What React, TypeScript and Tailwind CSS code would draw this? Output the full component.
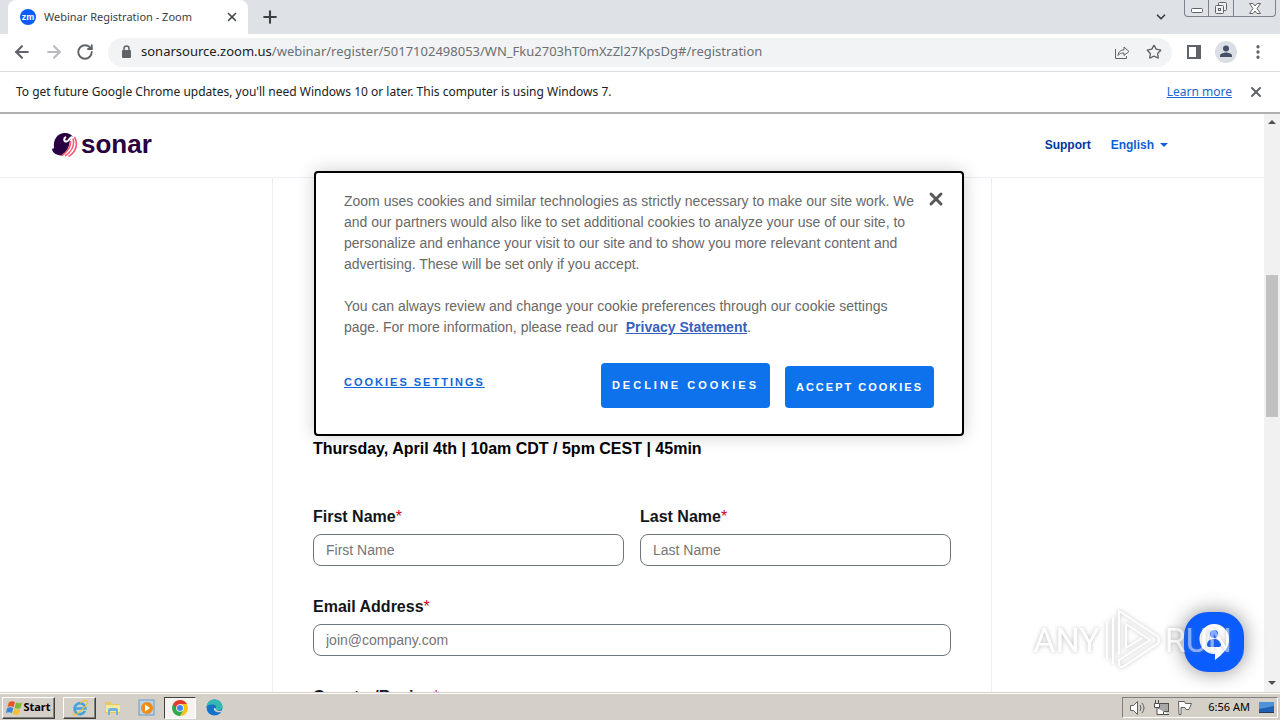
import { ReactNode, useState } from 'react';
import { ArrowLeft, ArrowRight, ChevronDown, MoreVertical, Plus, RotateCw, Star, X } from 'lucide-react';

const URL_HOST = 'sonarsource.zoom.us';
const URL_PATH = '/webinar/register/5017102498053/WN_Fku2703hT0mXzZl27KpsDg#/registration';

function ZoomFavicon() {
  return (
    <span className="flex h-4 w-4 items-center justify-center rounded-full bg-[#0b5cff] font-['Liberation_Sans',sans-serif] text-[9px] leading-none font-bold text-white">
      zm
    </span>
  );
}

function WindowButtons() {
  return (
    <div className="flex h-[17px] self-start rounded-b-sm border border-t-0 border-[#7d828c] text-[#5f6368]">
      <button type="button" aria-label="Minimize" className="flex w-6 items-end justify-center border-r border-[#7d828c] pb-[3px]">
        <svg width="12" height="5" viewBox="0 0 12 5" fill="#fff" stroke="currentColor">
          <rect x=".5" y=".5" width="11" height="4" rx="1" />
        </svg>
      </button>
      <button type="button" aria-label="Restore" className="flex w-[25px] items-center justify-center border-r border-[#7d828c]">
        <svg width="14" height="14" viewBox="0 0 14 14" fill="#eef0f3" stroke="currentColor">
          <rect x="4.500" y="1.500" width="8" height="8" rx="1" />
          <rect x="1.500" y="4.500" width="8" height="8" rx="1" />
          <rect x="4.500" y="7.500" width="2" height="2" />
        </svg>
      </button>
      <button type="button" aria-label="Close window" className="flex w-[41px] items-center justify-center">
        <svg width="12" height="11" viewBox="0 0 12 11" fill="#fff" stroke="currentColor">
          <path d="M.5.500h3.500l2 2.500 2-2.500h3.500l-3.500 5 3.500 5h-3.500l-2-2.500-2 2.500h-3.500l3.500-5z" />
        </svg>
      </button>
    </div>
  );
}

function TabStrip() {
  return (
    <div className="flex h-[34px] bg-[#dee1e6] text-[#3c4043]">
      <div className="ml-2 flex w-60 items-center rounded-t-lg bg-white pr-2 pl-3">
        <ZoomFavicon />
        <span className="ml-2 flex-1 text-[11px]">Webinar Registration - Zoom</span>
        <button type="button" aria-label="Close tab" className="flex h-4 w-4 items-center justify-center">
          <X className="h-3.5 w-3.5" strokeWidth={2.5} />
        </button>
      </div>
      <button type="button" aria-label="New tab" className="ml-3 self-center">
        <Plus className="h-5 w-5" strokeWidth={2.5} />
      </button>
      <button type="button" aria-label="Search tabs" className="mr-4 ml-auto self-center">
        <ChevronDown className="h-3.5 w-3.5" strokeWidth={3} />
      </button>
      <WindowButtons />
      <div className="w-1" />
    </div>
  );
}

function ShareIcon() {
  return (
    <svg width="16" height="16" viewBox="0 0 16 16" fill="none" stroke="currentColor">
      <path d="M1.500 5v9.500h11V12" />
      <path d="M4 11.500c.5-4 2.500-5.500 6-5.500V3l5 4.500-5 4V9c-3 0-4.500.5-6 2.500z" />
    </svg>
  );
}

function Toolbar() {
  return (
    <div className="flex h-[38px] items-center border-b border-[#dadce0] bg-white pb-px text-[#5f6368]">
      <button type="button" aria-label="Back" className="ml-3">
        <ArrowLeft className="h-5 w-5" strokeWidth={2.5} />
      </button>
      <button type="button" aria-label="Forward" className="ml-3 text-[#b9bbbe]">
        <ArrowRight className="h-5 w-5" strokeWidth={2.5} />
      </button>
      <button type="button" aria-label="Reload" className="ml-3">
        <RotateCw className="h-[18px] w-[18px]" strokeWidth={2.5} />
      </button>
      <div className="ml-3.5 flex h-[29px] min-w-0 flex-1 items-center rounded-full bg-[#f1f3f4] px-2.5">
        <svg width="16" height="16" viewBox="0 0 16 16" fill="none" className="shrink-0">
          <rect x="4" y="6" width="9" height="8" rx="1" fill="#5f6368" />
          <path d="M6 7V4.500a2.500 2.500 0 0 1 5 0V7" stroke="#5f6368" strokeWidth="1.500" />
        </svg>
        <button type="button" className="ml-[7px] flex-1 truncate text-left text-[13px] text-[#6b6f73]">
          <span className="text-[#202124]">{URL_HOST}</span>
          {URL_PATH}
        </button>
        <button type="button" aria-label="Share this page" className="mr-4">
          <ShareIcon />
        </button>
        <button type="button" aria-label="Bookmark this tab">
          <Star className="h-4 w-4" />
        </button>
      </div>
      <button type="button" aria-label="Side panel" className="ml-[15px]">
        <svg width="14" height="14" viewBox="0 0 14 14" fill="none">
          <rect x="1" y="1" width="12" height="12" stroke="#5f6368" strokeWidth="2" />
          <path d="M9 0h5v14H9z" fill="#5f6368" />
        </svg>
      </button>
      <button type="button" aria-label="Profile" className="ml-3.5">
        <svg width="22" height="22" viewBox="0 0 22 22">
          <circle cx="11" cy="11" r="11" fill="#dadee5" />
          <circle cx="11" cy="7.500" r="3" fill="#46506a" />
          <path d="M5 16v-1.500c0-2 4-3 6-3s6 1 6 3V16z" fill="#46506a" />
        </svg>
      </button>
      <button type="button" aria-label="Menu" className="mr-[13px] ml-3">
        <MoreVertical className="h-[18px] w-[18px]" strokeWidth={2.5} />
      </button>
    </div>
  );
}

function InfoBar() {
  return (
    <div className="flex h-[42px] items-center border-b-2 border-[#b0b0b0] bg-white pr-4 pl-4 text-xs text-[#202124]">
      <span className="flex-1">
        To get future Google Chrome updates, you'll need Windows 10 or later. This computer is using Windows 7.
      </span>
      <a href="#learn-more" className="text-[#1967d2] underline">
        Learn more
      </a>
      <button type="button" aria-label="Dismiss" className="ml-4 text-[#5f6368]">
        <X className="h-4 w-4" strokeWidth={3} />
      </button>
    </div>
  );
}

function SonarLogo() {
  return (
    <a href="#sonar" aria-label="Sonar" className="flex items-center gap-[3px] text-[#290042]">
      <svg width="27" height="26" viewBox="0 0 27 26" fill="none">
        <path
          d="M1 16.500c1 .5 1.500.3 2-.5C2 8 6 1.500 13 1c4-.3 7 1 8.500 3.500L19 8c-.5 6-3 12-7.500 15.500C6 23.500 1 21 1 16.500z"
          fill="#290042"
        />
        <path d="M15 5c-2.500 1-2.500 4.500.5 4.500 2.500 0 2.500-4 5.500-4.500" stroke="#fff" strokeWidth="2" />
        <path
          d="M19.500 9c.5 6-3.500 11-8.500 14.500M22 6.500c2 7-2 13.500-8 17.500M23.500 5c4 7 1.500 15-6 19.500"
          stroke="#fd5672"
          strokeWidth="1.600"
        />
      </svg>
      <span className="pb-0.5 text-[26px] leading-none font-bold">sonar</span>
    </a>
  );
}

function SiteHeader() {
  return (
    <header className="flex h-16 items-center border-b border-[#ededf4] pr-24 pl-[51px] pb-px">
      <SonarLogo />
      <nav className="ml-auto flex items-center gap-5 text-xs font-bold">
        <a href="#support" className="text-[#00359e]">
          Support
        </a>
        <button type="button" className="flex items-center gap-1.5 text-[#0e5fd8]">
          English
          <svg width="8" height="4" viewBox="0 0 8 4">
            <path d="M0 0h8L4 4z" fill="currentColor" />
          </svg>
        </button>
      </nav>
    </header>
  );
}

function Field({ id, label, children }: { id: string; label: string; children: ReactNode }) {
  return (
    <div className="flex flex-col gap-1">
      <label htmlFor={id} className="h-[25px] text-base font-bold">
        {label}
        <span className="font-normal text-[#d0021b]">*</span>
      </label>
      {children}
    </div>
  );
}

const inputClass =
  'h-8 w-full rounded-lg border border-[#6e7680] bg-white px-3 text-sm text-[#222230] placeholder:text-[#757575]';

function RegistrationForm() {
  return (
    <form className="mx-auto w-full max-w-[720px] border-x border-[#ededf4] px-10 pt-[259px] text-[#131619]">
      <p className="text-base font-bold text-black">Thursday, April 4th | 10am CDT / 5pm CEST | 45min</p>
      <div className="mt-11 grid grid-cols-2 gap-x-4 gap-y-[29px]">
        <Field id="first-name" label="First Name">
          <input id="first-name" placeholder="First Name" className={inputClass} />
        </Field>
        <Field id="last-name" label="Last Name">
          <input id="last-name" placeholder="Last Name" className={inputClass} />
        </Field>
        <div className="col-span-2">
          <Field id="email" label="Email Address">
            <input id="email" type="email" placeholder="join@company.com" className={inputClass} />
          </Field>
        </div>
        <div className="col-span-2">
          <Field id="country" label="Country/Region">
            <select id="country" className={inputClass} />
          </Field>
        </div>
      </div>
    </form>
  );
}

function CookieDialog({ onClose }: { onClose: () => void }) {
  return (
    <div
      role="dialog"
      aria-label="Cookie preferences"
      className="w-[650px] rounded-sm border-2 border-black bg-white px-7 pt-4 pb-[26px] shadow-[0_0_18px_rgba(0,0,0,0.2)]"
    >
      <div className="flex items-start">
        <div className="flex-1 pt-0.5 text-sm leading-[21px] text-[#696969]">
          <p>
            Zoom uses cookies and similar technologies as strictly necessary to make our site work. We
            <br />
            and our partners would also like to set additional cookies to analyze your use of our site, to
            <br />
            personalize and enhance your visit to our site and to show you more relevant content and
            <br />
            advertising. These will be set only if you accept.
          </p>
          <p className="mt-[21px]">
            You can always review and change your cookie preferences through our cookie settings
            <br />
            page. For more information, please read our&nbsp;{' '}
            <a href="#privacy" className="font-bold text-[#3860be] underline">
              Privacy Statement
            </a>
            .
          </p>
        </div>
        <button type="button" aria-label="Close" onClick={onClose} className="-mr-3 text-[#565656]">
          <X className="h-5 w-5" strokeWidth={3.5} />
        </button>
      </div>
      <div className="mt-[25px] flex items-end">
        <button type="button" className="mr-auto self-center pb-1.5 text-[11px] font-bold tracking-[2px] text-[#1068d8] underline">
          COOKIES SETTINGS
        </button>
        <button
          type="button"
          onClick={onClose}
          className="h-[45px] rounded-sm bg-[#0e72ed] px-[11px] text-[11px] font-bold tracking-[3px] text-white"
        >
          DECLINE COOKIES
        </button>
        <button
          type="button"
          onClick={onClose}
          className="ml-[15px] h-[42px] rounded-sm bg-[#0e72ed] px-[11px] text-[11px] font-bold tracking-[2px] text-white"
        >
          ACCEPT COOKIES
        </button>
      </div>
    </div>
  );
}

function PageScrollbar() {
  return (
    <div className="flex w-4 shrink-0 flex-col items-center bg-[#f1f1f1]">
      <svg width="16" height="17" viewBox="0 0 16 17">
        <path d="M4 10h8L8 6z" fill="#505050" />
      </svg>
      <div className="mt-36 h-[142px] w-3 bg-[#c1c1c1]" />
      <svg width="16" height="17" viewBox="0 0 16 17" className="mt-auto">
        <path d="M4 6h8l-4 4z" fill="#505050" />
      </svg>
    </div>
  );
}

function ChatButton() {
  return (
    <button
      type="button"
      aria-label="Open chat"
      className="flex h-[60px] w-[60px] items-center justify-center rounded-3xl bg-[#0b5cff] shadow-[0_0_20px_rgba(0,0,0,0.45)]"
    >
      <svg width="32" height="38" viewBox="0 0 32 38">
        <path d="M16 1a15 15 0 0 1 15 15c0 9-6 15-14 21v-6A15 15 0 1 1 16 1z" fill="#fff" />
        <circle cx="16" cy="11" r="4" fill="#0b5cff" />
        <path d="M9 22c0-4 3-6 7-6s7 2 7 6c0 1-1 2-2 2H11c-1 0-2-1-2-2z" fill="#0b5cff" />
      </svg>
    </button>
  );
}

function Watermark() {
  return (
    <div className="pointer-events-none flex items-center gap-1 font-['Roboto',sans-serif] text-[34px] leading-none text-white opacity-50 [text-shadow:0_0_4px_#777]">
      <span>ANY</span>
      <svg width="57" height="64" viewBox="0 0 57 64" fill="none" className="drop-shadow-[0_0_2px_#777]">
        <path
          d="M3 51V14M9 56V9M15 46V3l38 25a5 5 0 0 1 0 8L20 58c-3 2-5 1-5-2v-4l31-20-24-16v24l16-10"
          stroke="#fff"
          strokeWidth="2"
          strokeLinejoin="round"
        />
      </svg>
      <span>RUN</span>
    </div>
  );
}

const raised = 'border border-t-white border-l-white border-r-[#404040] border-b-[#404040] shadow-[inset_-1px_-1px_0_#808080]';
const sunken = 'border border-t-[#404040] border-l-[#404040] border-r-white border-b-white';

function WindowsFlag() {
  return (
    <svg width="17" height="16" viewBox="0 0 17 16">
      <path d="M3 2c2-1 4-1 6 0L7.500 7c-2-1-4-1-6 0z" fill="#e8542a" />
      <path d="M10 2.500c2 1 4 1 6 0L14.500 8c-2 1-4 1-6 0z" fill="#7cb83c" />
      <path d="M1.200 8c2-1 4-1 6 0L6 13c-2-1-4-1-6 0z" fill="#3b86d8" />
      <path d="M8.200 9c2 1 4 1 6 0L13 14c-2 1-4 1-6 0z" fill="#f5bf2b" />
    </svg>
  );
}

function ExplorerIcon() {
  return (
    <svg width="18" height="18" viewBox="0 0 18 18" fill="none">
      <path d="M14 12A5.500 5.500 0 1 1 14.500 9.500H4.500" stroke="#3fa4e0" strokeWidth="2.600" />
      <path d="M3 12c-2 4-1 5 2 3.500C11 12 18 4 16.500 2 15.500.5 12 2 9 4" stroke="#efc23a" strokeWidth="1.200" />
    </svg>
  );
}

function FolderIcon() {
  return (
    <svg width="18" height="18" viewBox="0 0 18 18">
      <path d="M1 3h6l1 2h8v9H1z" fill="#e9c75c" />
      <path d="M2 6h14v7H2z" fill="#f8e8a0" />
      <path d="M4 16v-5q0-2 2-2h6q2 0 2 2v5h-2v-4H6v4z" fill="#6db4dc" />
    </svg>
  );
}

function PlayerIcon() {
  return (
    <svg width="18" height="18" viewBox="0 0 18 18">
      <rect x="1" y="1" width="15" height="15" fill="#b7d4ec" stroke="#6d9cc4" />
      <circle cx="9" cy="9" r="6" fill="#f28a1c" />
      <path d="M7 5.500v7l5-3.500z" fill="#fff" />
    </svg>
  );
}

function ChromeIcon() {
  return (
    <svg width="16" height="16" viewBox="0 0 16 16">
      <path d="M8 8V0a8 8 0 0 1 6.900 4L16 8a8 8 0 0 1-8 8l3.500-6z" fill="#fbc116" />
      <path d="M8 8l3.500 2L8 16A8 8 0 0 1 1.100 4z" fill="#2da94f" />
      <path d="M1.100 4a8 8 0 0 1 13.800 0H8L5 9.500z" fill="#e33b2e" />
      <circle cx="8" cy="8" r="3.800" fill="#fff" />
      <circle cx="8" cy="8" r="3" fill="#4285f4" />
    </svg>
  );
}

function EdgeIcon() {
  return (
    <svg width="17" height="17" viewBox="0 0 17 17">
      <circle cx="8.500" cy="8.500" r="8" fill="#1473c9" />
      <path d="M.5 8C1 3 4.500.5 8.500.5c5 0 8 3.500 8 7 0 3-2.500 4-4.500 4s-3-.8-2-2c1-2-1-4-3.500-4S1.500 6 .5 8z" fill="#35b8b0" />
      <path d="M8 9c-1 3 3 5 7 4l1.500-.5-1-1c-3 1-6 0-5.500-2z" fill="#d4d0c8" />
    </svg>
  );
}

function Taskbar() {
  return (
    <footer className="flex h-7 items-center border-t border-[#d4d0c8] bg-[#d4d0c8] px-0.5 pt-0.5 text-[11px] text-black shadow-[inset_0_1px_0_#fff]">
      <button type="button" className={`flex h-[22px] w-[53px] items-center justify-center font-bold ${raised}`}>
        <WindowsFlag />
        Start
      </button>
      <button type="button" aria-label="Internet Explorer" className={`ml-2 flex h-[22px] w-[33px] items-center justify-center ${raised}`}>
        <ExplorerIcon />
      </button>
      <button type="button" aria-label="File Explorer" className="ml-2 flex w-[18px] justify-center">
        <FolderIcon />
      </button>
      <button type="button" aria-label="Media Player" className="ml-4 flex w-[18px] justify-center">
        <PlayerIcon />
      </button>
      <button type="button" aria-label="Google Chrome" className={`ml-2 flex h-[22px] w-8 items-center justify-center bg-[#f5f3f0] ${sunken}`}>
        <ChromeIcon />
      </button>
      <button type="button" aria-label="Microsoft Edge" className="ml-2.5">
        <EdgeIcon />
      </button>
      <div className="ml-auto flex h-[21px] w-[156px] items-center border border-t-[#808080] border-r-white border-b-white border-l-[#808080] pr-0.5 pl-1.5">
        <svg width="18" height="16" viewBox="0 0 18 16" fill="#fff" stroke="#606060">
          <path d="M1.500 5.500h3l4-4v13l-4-4h-3z" />
          <path d="M11 5q2 3 0 6M13 3q4 5 0 10" fill="none" />
        </svg>
        <svg width="18" height="16" viewBox="0 0 18 16" fill="#fff" stroke="#505050" className="ml-1.5">
          <rect x="5.500" y="3.500" width="10" height="8" fill="#a8a8a8" />
          <path d="M2.500 0v3M5.500 0v3M1.500 3.500h5v4h-5zM4 8v6.500h12M10.500 12v2" />
        </svg>
        <svg width="18" height="16" viewBox="0 0 18 16" fill="#fff" stroke="#606060" className="ml-1.5">
          <path d="M1.500 1.500h6l1 2h6l-2.500 6h-3l-1-2h-4v7h-2z" />
        </svg>
        <time className="ml-auto">6:56 AM</time>
        <svg width="17" height="14" viewBox="0 0 17 14" className="ml-2">
          <path d="M1 1h15v10H1z" fill="#1c61b4" />
          <path d="M1 1h15v4L1 8z" fill="#4e92d8" />
          <path d="M1 11h15v1H1z" fill="#233a5c" />
        </svg>
      </div>
    </footer>
  );
}

export default function App() {
  const [showCookies, setShowCookies] = useState(true);

  return (
    <div className="flex h-screen flex-col overflow-hidden bg-white font-['Noto_Sans',sans-serif]">
      <TabStrip />
      <Toolbar />
      <InfoBar />

      {/* Page */}
      <div className="relative flex min-h-0 flex-1 font-['Liberation_Sans',Arial,sans-serif]">
        <main className="min-w-0 flex-1 overflow-hidden">
          <SiteHeader />
          <RegistrationForm />
        </main>
        <PageScrollbar />

        {showCookies && (
          <div className="absolute inset-x-0 top-[57px] flex justify-center pr-0.5">
            <CookieDialog onClose={() => setShowCookies(false)} />
          </div>
        )}
        <div className="absolute right-9 bottom-5">
          <ChatButton />
        </div>
        <div className="absolute right-12 bottom-5">
          <Watermark />
        </div>
      </div>

      <Taskbar />
    </div>
  );
}
